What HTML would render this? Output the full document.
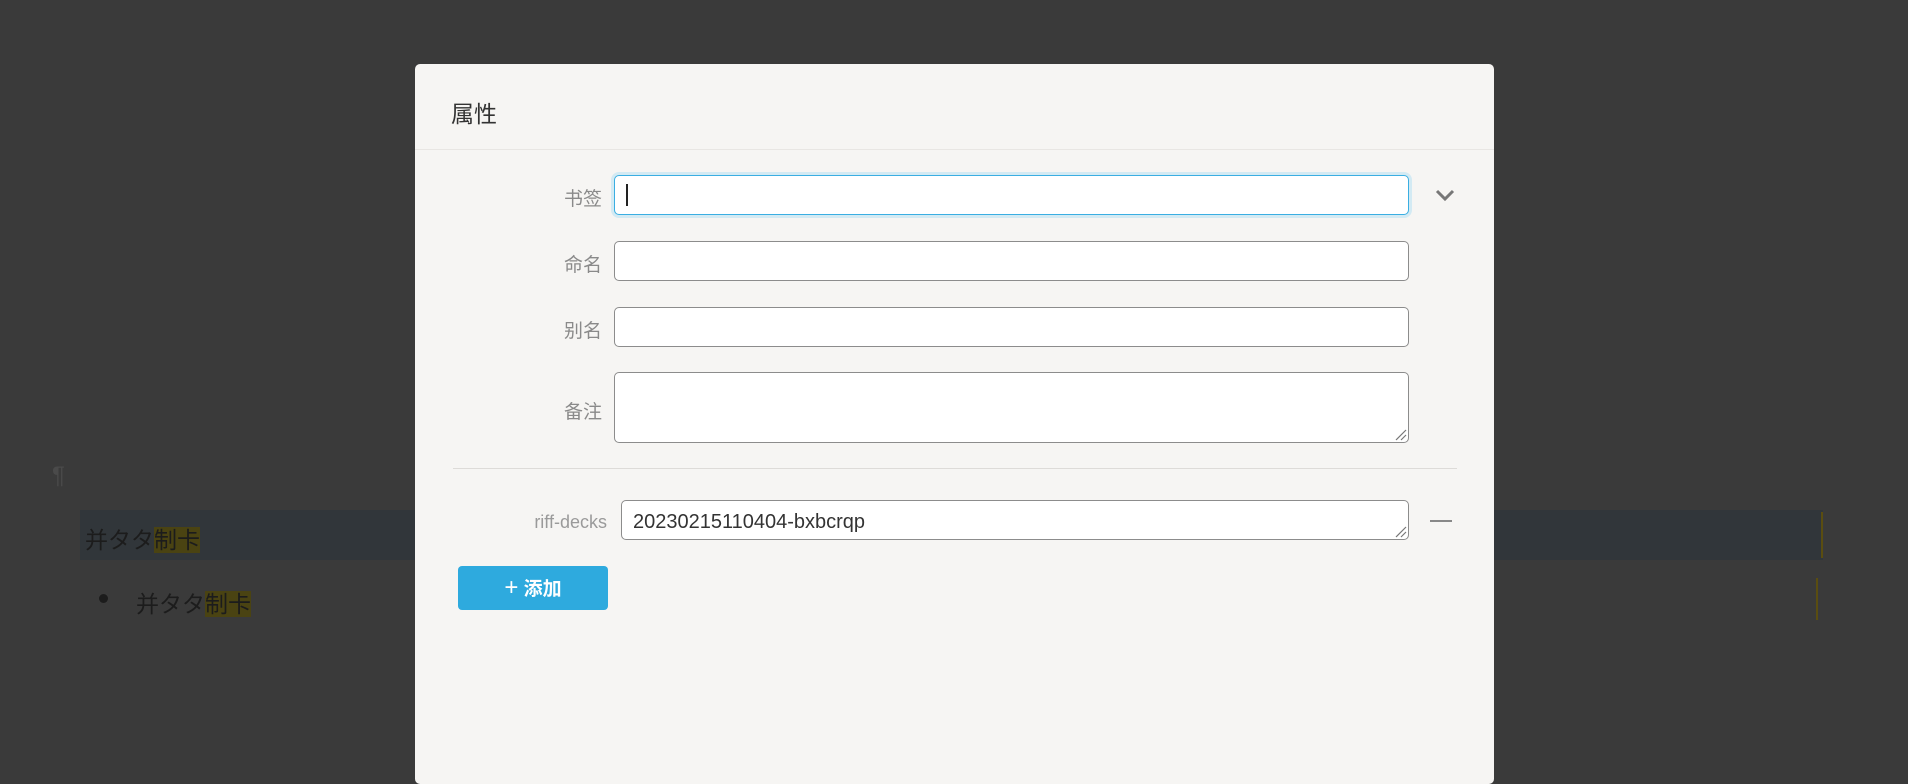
<!DOCTYPE html>
<html><head><meta charset="utf-8"><style>
*{box-sizing:border-box;margin:0;padding:0}
body{width:1908px;height:741px;background:#3a3a3a;position:relative;overflow:hidden;font-family:"Liberation Sans","Noto Sans CJK SC",sans-serif}
.abs{position:absolute}
.dlg{left:415px;top:64px;width:1079px;height:720px;background:#f6f5f3;border-radius:5px}
.hd{left:0;top:0;width:1079px;height:86px;border-bottom:1px solid #e8e6e3}
.lbl{color:#8a8a8a;font-size:19px;text-align:right;width:200px}
.inp{background:#fff;border:1.5px solid #8c8c8c;border-radius:5px}
.mark{background:#4a4312}
</style></head><body>
<div class="abs" style="left:52px;top:462px;color:#4a4a4a;font-size:24px">¶</div>
<div class="abs" style="left:80px;top:510px;width:1743px;height:50px;background:#31363a"></div>
<div class="abs" style="left:1821px;top:512px;width:2px;height:46px;background:#5a4d10"></div>
<div class="abs" style="left:1816px;top:578px;width:2px;height:42px;background:#5a4d10"></div>
<div class="abs" style="left:85px;top:521px;font-size:23px;color:#1c1c1c">并タタ<span class="mark">制卡</span></div>
<div class="abs" style="left:99px;top:594px;width:9px;height:9px;border-radius:50%;background:#1c1c1c"></div>
<div class="abs" style="left:136px;top:585px;font-size:23px;color:#1c1c1c">并タタ<span class="mark">制卡</span></div>

<div class="abs dlg">
 <div class="abs hd"></div>
 <div class="abs" style="left:36px;top:31px;font-size:23px;color:#333">属性</div>

 <div class="abs lbl" style="left:-13px;top:120px">书签</div>
 <div class="abs inp" style="left:199px;top:111px;width:795px;height:40px;border:1.5px solid #3aaee2;box-shadow:0 0 0 3px #d3eaf3"></div>
 <div class="abs" style="left:211px;top:120px;width:2px;height:22px;background:#222"></div>
 <svg class="abs" style="left:1020px;top:124px" width="20" height="14" viewBox="0 0 20 14"><path d="M2 3l8 8 8-8" fill="none" stroke="#777" stroke-width="3"/></svg>

 <div class="abs lbl" style="left:-13px;top:186px">命名</div>
 <div class="abs inp" style="left:199px;top:177px;width:795px;height:40px"></div>
 <div class="abs lbl" style="left:-13px;top:252px">别名</div>
 <div class="abs inp" style="left:199px;top:243px;width:795px;height:40px"></div>
 <div class="abs lbl" style="left:-13px;top:333px">备注</div>
 <div class="abs inp" style="left:199px;top:308px;width:795px;height:71px"></div>
 <svg class="abs" style="left:980px;top:365px" width="12" height="12"><path d="M1 11L11 1M6 11L11 6" stroke="#777" stroke-width="1.2"/></svg>

 <div class="abs" style="left:38px;top:404px;width:1004px;height:1px;background:#dddbd8"></div>

 <div class="abs" style="left:0;top:448px;width:192px;text-align:right;color:#9a9a9a;font-size:18px">riff-decks</div>
 <div class="abs inp" style="left:206px;top:436px;width:788px;height:40px"></div>
 <div class="abs" style="left:218px;top:447px;font-size:20px;color:#333">20230215110404-bxbcrqp</div>
 <svg class="abs" style="left:980px;top:462px" width="12" height="12"><path d="M1 11L11 1M6 11L11 6" stroke="#777" stroke-width="1.2"/></svg>
 <div class="abs" style="left:1015px;top:456px;width:22px;height:2px;background:#888"></div>

 <div class="abs" style="left:43px;top:502px;width:150px;height:44px;background:#2eaade;border-radius:4px;color:#fff;font-size:19px;font-weight:bold;text-align:center;line-height:44px"><span style="font-weight:normal;font-size:24px">+</span> 添加</div>
</div>
</body></html>
